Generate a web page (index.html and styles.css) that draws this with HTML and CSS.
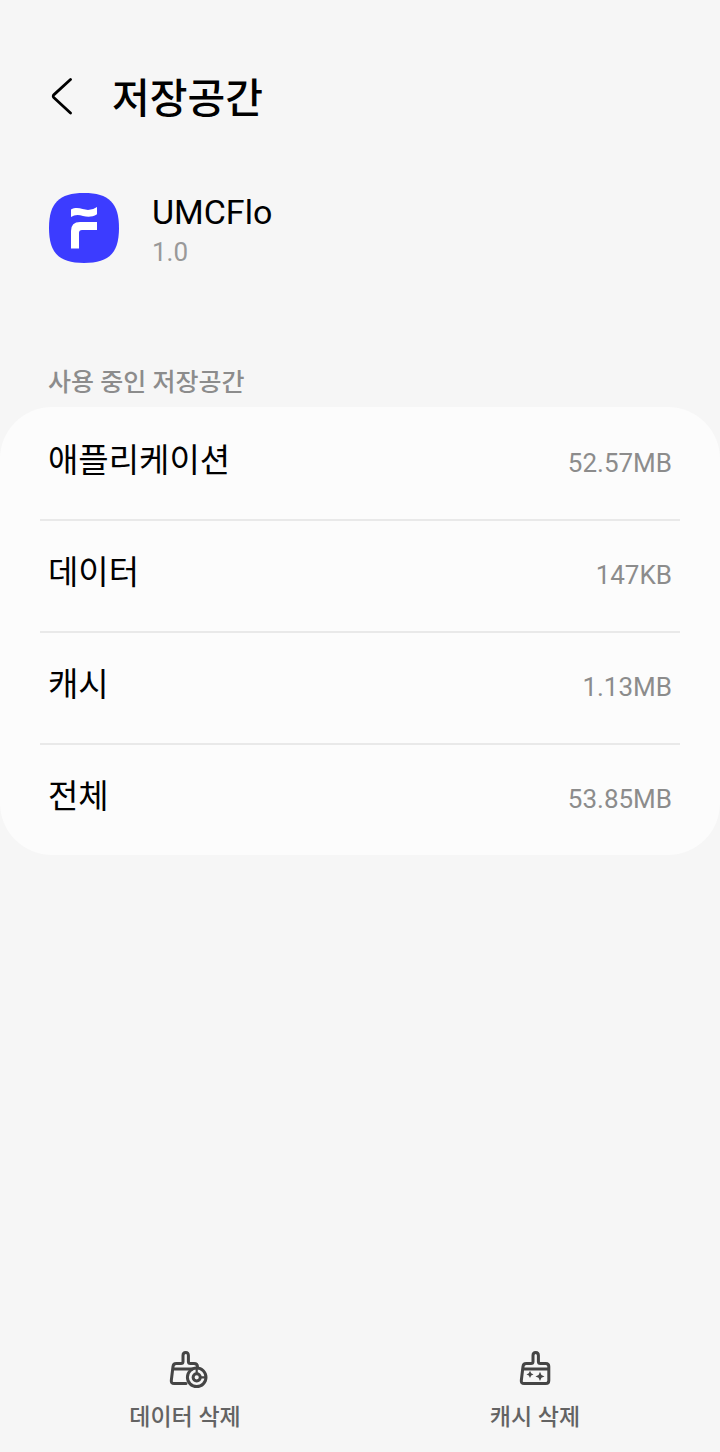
FILE: index.html
```html
<!DOCTYPE html>
<html lang="ko">
<head>
<meta charset="utf-8">
<meta name="viewport" content="width=device-width, initial-scale=1">
<title>저장공간</title>
<link rel="stylesheet" href="styles.css">
</head>
<body>
<div class="page">
  <header class="topbar">
    <button class="back" type="button" aria-label="뒤로">
      <svg width="24" height="46" viewBox="0 0 24 46" fill="none" stroke="#000" stroke-width="2.8" stroke-linecap="round" stroke-linejoin="round"><path d="M22.500 3.500 6 18.600Q4.400 20.200 6 21.800L22.500 37"/></svg>
    </button>
    <h1 class="title">저장공간</h1>
  </header>
  <main class="content">
    <section class="app">
      <svg class="app-icon" width="70" height="70" viewBox="0 0 70 70" aria-hidden="true">
        <path fill="#3c3cff" d="M35 0C60 0 70 10 70 35S60 70 35 70 0 60 0 35 10 0 35 0Z"/>
        <path fill="#fff" d="M22 16.500C28 13 34 16.500 39 17Q44 17 48 14V21.300C43 24.500 38 24 34 23Q27 20.500 22 24Z"/>
        <path fill="#fff" d="M22 55.500V38Q22 29 31 29H48V37H33Q30 37 30 40V55.500Z"/>
      </svg>
      <div class="app-text">
        <p class="app-name">UMCFlo</p>
        <p class="app-version">1.0</p>
      </div>
    </section>
    <h2 class="section-title">사용 중인 저장공간</h2>
    <dl class="card">
      <div class="row"><dt>애플리케이션</dt><dd>52.57MB</dd></div>
      <div class="row"><dt>데이터</dt><dd>147KB</dd></div>
      <div class="row"><dt>캐시</dt><dd>1.13MB</dd></div>
      <div class="row"><dt>전체</dt><dd>53.85MB</dd></div>
    </dl>
  </main>
  <footer class="actions">
    <button class="action" type="button">
      <svg width="46" height="40" viewBox="-6 0 46 40" fill="none" stroke="#454545" stroke-width="3" stroke-linecap="round" stroke-linejoin="round" aria-hidden="true">
        <path d="M18 33.500H6Q3 33.500 3.300 30.500L5 16.500Q5.300 13.500 8.300 13.500H13Q15 13.500 15 11.500V5.500Q15 2.500 17.700 2.500T20.400 5.500V11.500Q20.400 13.500 22.400 13.500H26Q29.500 13.500 29.500 17M5 19H24"/>
        <circle cx="28.700" cy="27.300" r="9.300"/>
        <circle cx="28.700" cy="27.300" r="3.600"/>
        <path d="M28.700 19V23M33 27.300H37" stroke-width="2.200"/>
      </svg>
      <span>데이터 삭제</span>
    </button>
    <button class="action" type="button">
      <svg width="40" height="40" viewBox="0 0 40 40" fill="none" stroke="#454545" stroke-width="3" stroke-linecap="round" stroke-linejoin="round" aria-hidden="true">
        <path d="M9 33.500H30.800Q33.800 33.500 33.800 30.500V16.500Q33.800 13.500 30.800 13.500H25.400Q23.400 13.500 23.400 11.500V5.500Q23.400 2.500 20.700 2.500T18 5.500V11.500Q18 13.500 16 13.500H11.300Q8.300 13.500 8 16.500L6.300 30.500Q6 33.500 9 33.500ZM8 19H33.500"/>
        <path fill="#454545" stroke="none" d="M15 20.800 16.200 23.200 18.500 24.400 16.200 25.600 15 28 13.800 25.600 11.500 24.400 13.800 23.200ZM25 21.800 26.400 25 29.500 26.400 26.400 27.800 25 31 23.600 27.800 20.500 26.400 23.600 25Z"/>
      </svg>
      <span>캐시 삭제</span>
    </button>
  </footer>
</div>
</body>
</html>
```
FILE: styles.css
```css
* {
  box-sizing: border-box;
  margin: 0;
  padding: 0;
}

body {
  background: #f6f6f6;
  color: #000;
  font-family: Roboto, "Noto Sans CJK KR", sans-serif;
}

button {
  border: 0;
  background: none;
  color: inherit;
  font: inherit;
  cursor: pointer;
}

svg {
  display: block;
}

.page {
  display: flex;
  flex-direction: column;
  min-height: 100vh;
}

.topbar {
  display: flex;
  align-items: center;
  gap: 40px;
  padding: 68px 48px 0;
}

.title {
  font-size: 41px;
  line-height: 62px;
  font-weight: 500;
}

.content {
  flex: 1;
}

.app {
  display: flex;
  align-items: flex-start;
  gap: 33px;
  padding: 63px 49px 0;
}

.app-name {
  font-size: 34px;
  line-height: 38px;
}

.app-version {
  color: #999;
  font-size: 26px;
  line-height: 42px;
}

.section-title {
  padding: 92px 48px 6px;
  color: #8c8c8c;
  font-size: 25px;
  line-height: 36px;
  font-weight: 500;
}

.card {
  padding: 0 40px;
  border-radius: 52px;
  background: #fcfcfc;
}

.row {
  display: flex;
  justify-content: space-between;
  height: 112px;
  padding: 28px 8px 0;
}

.row + .row {
  padding-top: 26px;
  border-top: 2px solid #e9e9e9;
}

.row dt {
  font-size: 33px;
  line-height: 52px;
}

.row dd {
  color: #8c8c8c;
  font-size: 26px;
  line-height: 56px;
}

.actions {
  display: flex;
  padding: 0 10px 17px;
}

.action {
  display: flex;
  flex: 1;
  flex-direction: column;
  align-items: center;
  gap: 11px;
  color: #636363;
  font-size: 23px;
  line-height: 34px;
  font-weight: 500;
}
```
